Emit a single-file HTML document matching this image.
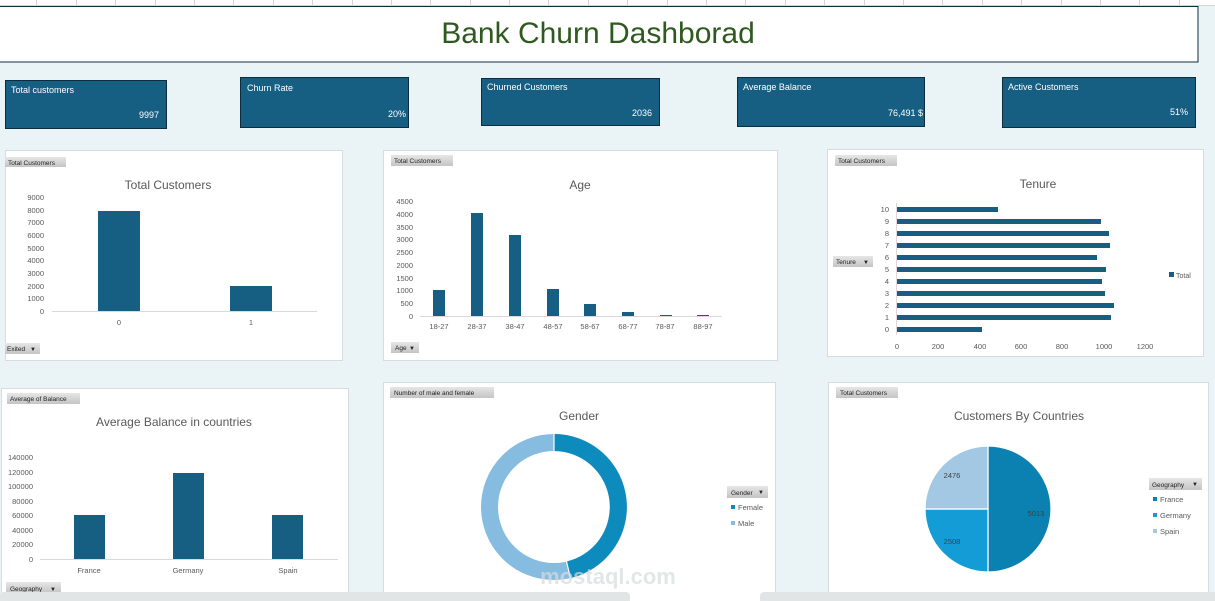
<!DOCTYPE html>
<html><head><meta charset="utf-8"><style>
html,body{margin:0;padding:0;background:#eaf3f6;}
svg{display:block;font-family:"Liberation Sans",sans-serif;}
</style></head><body>
<svg width="1215" height="601" viewBox="0 0 1215 601" xmlns="http://www.w3.org/2000/svg">
<defs>
<linearGradient id="btn" x1="0" y1="0" x2="0" y2="1"><stop offset="0" stop-color="#e6e6e6"/><stop offset="1" stop-color="#c4c4c4"/></linearGradient>
</defs>
<rect width="1215" height="601" fill="#eaf3f6"/>
<!-- top grid strip -->
<rect x="0" y="0" width="1215" height="6" fill="#fff"/>
<g stroke="#d4d4d4" stroke-width="1">
<line x1="0" y1="5.5" x2="1215" y2="5.5"/>
<line x1="36.5" y1="0" x2="36.5" y2="6"/><line x1="76.5" y1="0" x2="76.5" y2="6"/><line x1="115.5" y1="0" x2="115.5" y2="6"/><line x1="155.5" y1="0" x2="155.5" y2="6"/><line x1="194.5" y1="0" x2="194.5" y2="6"/><line x1="233.5" y1="0" x2="233.5" y2="6"/><line x1="273.5" y1="0" x2="273.5" y2="6"/><line x1="312.5" y1="0" x2="312.5" y2="6"/><line x1="352.5" y1="0" x2="352.5" y2="6"/><line x1="391.5" y1="0" x2="391.5" y2="6"/><line x1="430.5" y1="0" x2="430.5" y2="6"/><line x1="470.5" y1="0" x2="470.5" y2="6"/><line x1="509.5" y1="0" x2="509.5" y2="6"/><line x1="548.5" y1="0" x2="548.5" y2="6"/><line x1="588.5" y1="0" x2="588.5" y2="6"/><line x1="627.5" y1="0" x2="627.5" y2="6"/><line x1="667.5" y1="0" x2="667.5" y2="6"/><line x1="706.5" y1="0" x2="706.5" y2="6"/><line x1="745.5" y1="0" x2="745.5" y2="6"/><line x1="785.5" y1="0" x2="785.5" y2="6"/><line x1="824.5" y1="0" x2="824.5" y2="6"/><line x1="864.5" y1="0" x2="864.5" y2="6"/><line x1="903.5" y1="0" x2="903.5" y2="6"/><line x1="942.5" y1="0" x2="942.5" y2="6"/><line x1="982.5" y1="0" x2="982.5" y2="6"/><line x1="1021.5" y1="0" x2="1021.5" y2="6"/><line x1="1061.5" y1="0" x2="1061.5" y2="6"/><line x1="1100.5" y1="0" x2="1100.5" y2="6"/><line x1="1139.5" y1="0" x2="1139.5" y2="6"/><line x1="1179.5" y1="0" x2="1179.5" y2="6"/>
</g>
<!-- title -->
<rect x="-2" y="6.5" width="1200" height="55.5" fill="#fff" stroke="#0c2d3d" stroke-width="1"/>
<text x="598" y="43" font-size="30" fill="#2f5a1f" text-anchor="middle">Bank Churn Dashborad</text>

<!-- KPI cards -->
<g font-size="9" fill="#fff">
<rect x="5.5" y="80.5" width="161" height="48" fill="#175f82" stroke="#0c2d3d"/>
<text x="11" y="93">Total customers</text><text x="159" y="118" text-anchor="end">9997</text>
<rect x="240.5" y="77.5" width="168" height="50" fill="#175f82" stroke="#0c2d3d"/>
<text x="247" y="91">Churn Rate</text><text x="406" y="117" text-anchor="end">20%</text>
<rect x="481.5" y="78.5" width="178" height="47" fill="#175f82" stroke="#0c2d3d"/>
<text x="487" y="90">Churned Customers</text><text x="652" y="116" text-anchor="end">2036</text>
<rect x="737.5" y="77.5" width="187" height="49" fill="#175f82" stroke="#0c2d3d"/>
<text x="743" y="90">Average Balance</text><text x="923" y="116" text-anchor="end">76,491 $</text>
<rect x="1002.5" y="77.5" width="193" height="50" fill="#175f82" stroke="#0c2d3d"/>
<text x="1008" y="90">Active Customers</text><text x="1188" y="115" text-anchor="end">51%</text>
</g>

<!-- panels -->
<g fill="#fff" stroke="#d6dcdf">
<rect x="5.5" y="150.5" width="337" height="210"/>
<rect x="383.5" y="150.5" width="394" height="210"/>
<rect x="827.5" y="149.5" width="376" height="207"/>
<rect x="1.5" y="388.5" width="347" height="215"/>
<rect x="383.5" y="382.5" width="392" height="222"/>
<rect x="828.5" y="382.5" width="380" height="222"/>
</g>

<!-- buttons -->
<g font-size="6.5" fill="#222">
<rect x="5" y="157" width="61" height="10" fill="url(#btn)"/><text x="8" y="165">Total Customers</text>
<rect x="5" y="343" width="35" height="11" fill="url(#btn)"/><text x="7" y="351">Exited</text><text x="30" y="351" font-size="6">▼</text>
<rect x="391" y="155" width="62" height="11" fill="url(#btn)"/><text x="394" y="163">Total Customers</text>
<rect x="391" y="342" width="28" height="11" fill="url(#btn)"/><text x="395" y="350">Age</text><text x="409" y="350" font-size="6">▼</text>
<rect x="835" y="155" width="62" height="11" fill="url(#btn)"/><text x="838" y="163">Total Customers</text>
<rect x="833" y="256" width="40" height="11" fill="url(#btn)"/><text x="836" y="264">Tenure</text><text x="863" y="264" font-size="6">▼</text>
<rect x="7" y="393" width="73" height="11" fill="url(#btn)"/><text x="10" y="401">Average of Balance</text>
<rect x="6" y="582" width="55" height="11" fill="url(#btn)"/><text x="10" y="591">Geography</text><text x="50" y="591" font-size="6">▼</text>
<rect x="390" y="387" width="104" height="11" fill="url(#btn)"/><text x="394" y="395">Number of male and female</text>
<rect x="727" y="486" width="41" height="12" fill="url(#btn)"/><text x="731" y="495">Gender</text><text x="758" y="494" font-size="6">▼</text>
<rect x="836" y="387" width="62" height="11" fill="url(#btn)"/><text x="840" y="395">Total Customers</text>
<rect x="1149" y="478" width="53" height="12" fill="url(#btn)"/><text x="1152" y="487">Geography</text><text x="1192" y="486" font-size="6">▼</text>
</g>

<!-- chart titles -->
<g font-size="12" fill="#595959" text-anchor="middle">
<text x="168" y="189">Total Customers</text>
<text x="580" y="189">Age</text>
<text x="1038" y="188">Tenure</text>
<text x="174" y="426">Average Balance in countries</text>
<text x="579" y="420">Gender</text>
<text x="1019" y="420">Customers By Countries</text>
</g>

<!-- Chart 1 -->
<g font-size="7.5" fill="#595959" text-anchor="end">
<text x="44" y="200">9000</text><text x="44" y="213">8000</text><text x="44" y="225">7000</text><text x="44" y="238">6000</text><text x="44" y="251">5000</text><text x="44" y="263">4000</text><text x="44" y="276">3000</text><text x="44" y="289">2000</text><text x="44" y="301">1000</text><text x="44" y="314">0</text>
</g>
<line x1="52" y1="311.5" x2="317" y2="311.5" stroke="#d9d9d9"/>
<rect x="98" y="211" width="42" height="100" fill="#175f82"/>
<rect x="230" y="286" width="42" height="25" fill="#175f82"/>
<g font-size="7.5" fill="#595959" text-anchor="middle"><text x="119" y="325">0</text><text x="251" y="325">1</text></g>

<!-- Chart 2 Age -->
<g font-size="7.5" fill="#595959" text-anchor="end">
<text x="413" y="204">4500</text><text x="413" y="217">4000</text><text x="413" y="230">3500</text><text x="413" y="242">3000</text><text x="413" y="255">2500</text><text x="413" y="268">2000</text><text x="413" y="281">1500</text><text x="413" y="293">1000</text><text x="413" y="306">500</text><text x="413" y="319">0</text>
</g>
<line x1="420" y1="316.5" x2="722" y2="316.5" stroke="#d9d9d9"/>
<g fill="#175f82">
<rect x="433" y="290" width="12" height="26"/>
<rect x="471" y="213" width="12" height="103"/>
<rect x="509" y="235" width="12" height="81"/>
<rect x="547" y="289" width="12" height="27"/>
<rect x="584" y="304" width="12" height="12"/>
<rect x="622" y="312" width="12" height="4"/>
<rect x="660" y="315" width="12" height="1"/>
<rect x="697" y="315" width="12" height="1"/>
</g>
<g font-size="7.5" fill="#595959" text-anchor="middle">
<text x="439" y="329">18-27</text><text x="477" y="329">28-37</text><text x="515" y="329">38-47</text><text x="553" y="329">48-57</text><text x="590" y="329">58-67</text><text x="628" y="329">68-77</text><text x="665" y="329">78-87</text><text x="703" y="329">88-97</text>
</g>

<!-- Chart 3 Tenure -->
<line x1="896.5" y1="203" x2="896.5" y2="335" stroke="#d9d9d9"/>
<g fill="#175f82">
<rect x="897" y="207" width="101" height="5"/>
<rect x="897" y="219" width="204" height="5"/>
<rect x="897" y="231" width="212" height="5"/>
<rect x="897" y="243" width="213" height="5"/>
<rect x="897" y="255" width="200" height="5"/>
<rect x="897" y="267" width="209" height="5"/>
<rect x="897" y="279" width="205" height="5"/>
<rect x="897" y="291" width="208" height="5"/>
<rect x="897" y="303" width="217" height="5"/>
<rect x="897" y="315" width="214" height="5"/>
<rect x="897" y="327" width="85" height="5"/>
<rect x="1169" y="272" width="5" height="5"/>
</g>
<g font-size="7.5" fill="#595959" text-anchor="end">
<text x="889" y="212">10</text><text x="889" y="224">9</text><text x="889" y="236">8</text><text x="889" y="248">7</text><text x="889" y="260">6</text><text x="889" y="272">5</text><text x="889" y="284">4</text><text x="889" y="296">3</text><text x="889" y="308">2</text><text x="889" y="320">1</text><text x="889" y="332">0</text>
</g>
<g font-size="7.5" fill="#595959" text-anchor="middle">
<text x="897" y="349">0</text><text x="938" y="349">200</text><text x="980" y="349">400</text><text x="1021" y="349">600</text><text x="1062" y="349">800</text><text x="1104" y="349">1000</text><text x="1145" y="349">1200</text>
</g>
<text x="1176" y="278" font-size="7" fill="#595959">Total</text>

<!-- Chart 4 -->
<g font-size="7.5" fill="#595959" text-anchor="end">
<text x="33" y="460">140000</text><text x="33" y="475">120000</text><text x="33" y="489">100000</text><text x="33" y="504">80000</text><text x="33" y="518">60000</text><text x="33" y="533">40000</text><text x="33" y="547">20000</text><text x="33" y="562">0</text>
</g>
<line x1="40" y1="559.5" x2="338" y2="559.5" stroke="#d9d9d9"/>
<g fill="#175f82">
<rect x="74" y="515" width="31" height="44"/>
<rect x="173" y="473" width="31" height="86"/>
<rect x="272" y="515" width="31" height="44"/>
</g>
<g font-size="7.5" fill="#595959" text-anchor="middle"><text x="89" y="573">France</text><text x="188" y="573">Germany</text><text x="288" y="573">Spain</text></g>

<!-- Chart 5 Gender donut -->
<g transform="translate(554,507)">
<circle r="64.5" fill="none" stroke="#86bce0" stroke-width="17"/>
<path d="M0,-64.5 A64.5,64.5 0 0 1 14.5,62.8" fill="none" stroke="#0e8bbd" stroke-width="17"/>
<line x1="0" y1="-74" x2="0" y2="-55" stroke="#fff" stroke-width="1.2"/>
<line x1="12.4" y1="54" x2="16.6" y2="72" stroke="#fff" stroke-width="1.2"/>
</g>
<rect x="731" y="505" width="4" height="4" fill="#0e8bbd"/>
<rect x="731" y="521" width="4" height="4" fill="#86bce0"/>
<g font-size="7.5" fill="#595959"><text x="738" y="510">Female</text><text x="738" y="526">Male</text></g>

<!-- Chart 6 pie -->
<g transform="translate(988,509)" stroke="#fff" stroke-width="1.2">
<path d="M0,0 L0,-63 A63,63 0 0 1 0,63 Z" fill="#0b81b1"/>
<path d="M0,0 L0,63 A63,63 0 0 1 -63,0 Z" fill="#139cd6"/>
<path d="M0,0 L-63,0 A63,63 0 0 1 0,-63 Z" fill="#a3c8e4"/>
</g>
<g font-size="7.5" fill="#404040" text-anchor="middle"><text x="1036" y="516">5013</text><text x="952" y="544">2508</text><text x="952" y="478">2476</text></g>
<rect x="1153" y="497" width="4" height="4" fill="#0b81b1"/>
<rect x="1153" y="513" width="4" height="4" fill="#139cd6"/>
<rect x="1153" y="529" width="4" height="4" fill="#a3c8e4"/>
<g font-size="7.5" fill="#595959"><text x="1160" y="502">France</text><text x="1160" y="518">Germany</text><text x="1160" y="534">Spain</text></g>

<!-- watermark -->
<text x="608" y="584" font-size="22" fill="#d8dcdd" opacity="0.7" text-anchor="middle" font-weight="bold">mostaql.com</text>

<!-- bottom bars -->
<rect x="0" y="592" width="630" height="12" rx="4" fill="#e2e5e6"/>
<rect x="760" y="592" width="460" height="12" rx="4" fill="#e2e5e6"/>
</svg>
</body></html>
